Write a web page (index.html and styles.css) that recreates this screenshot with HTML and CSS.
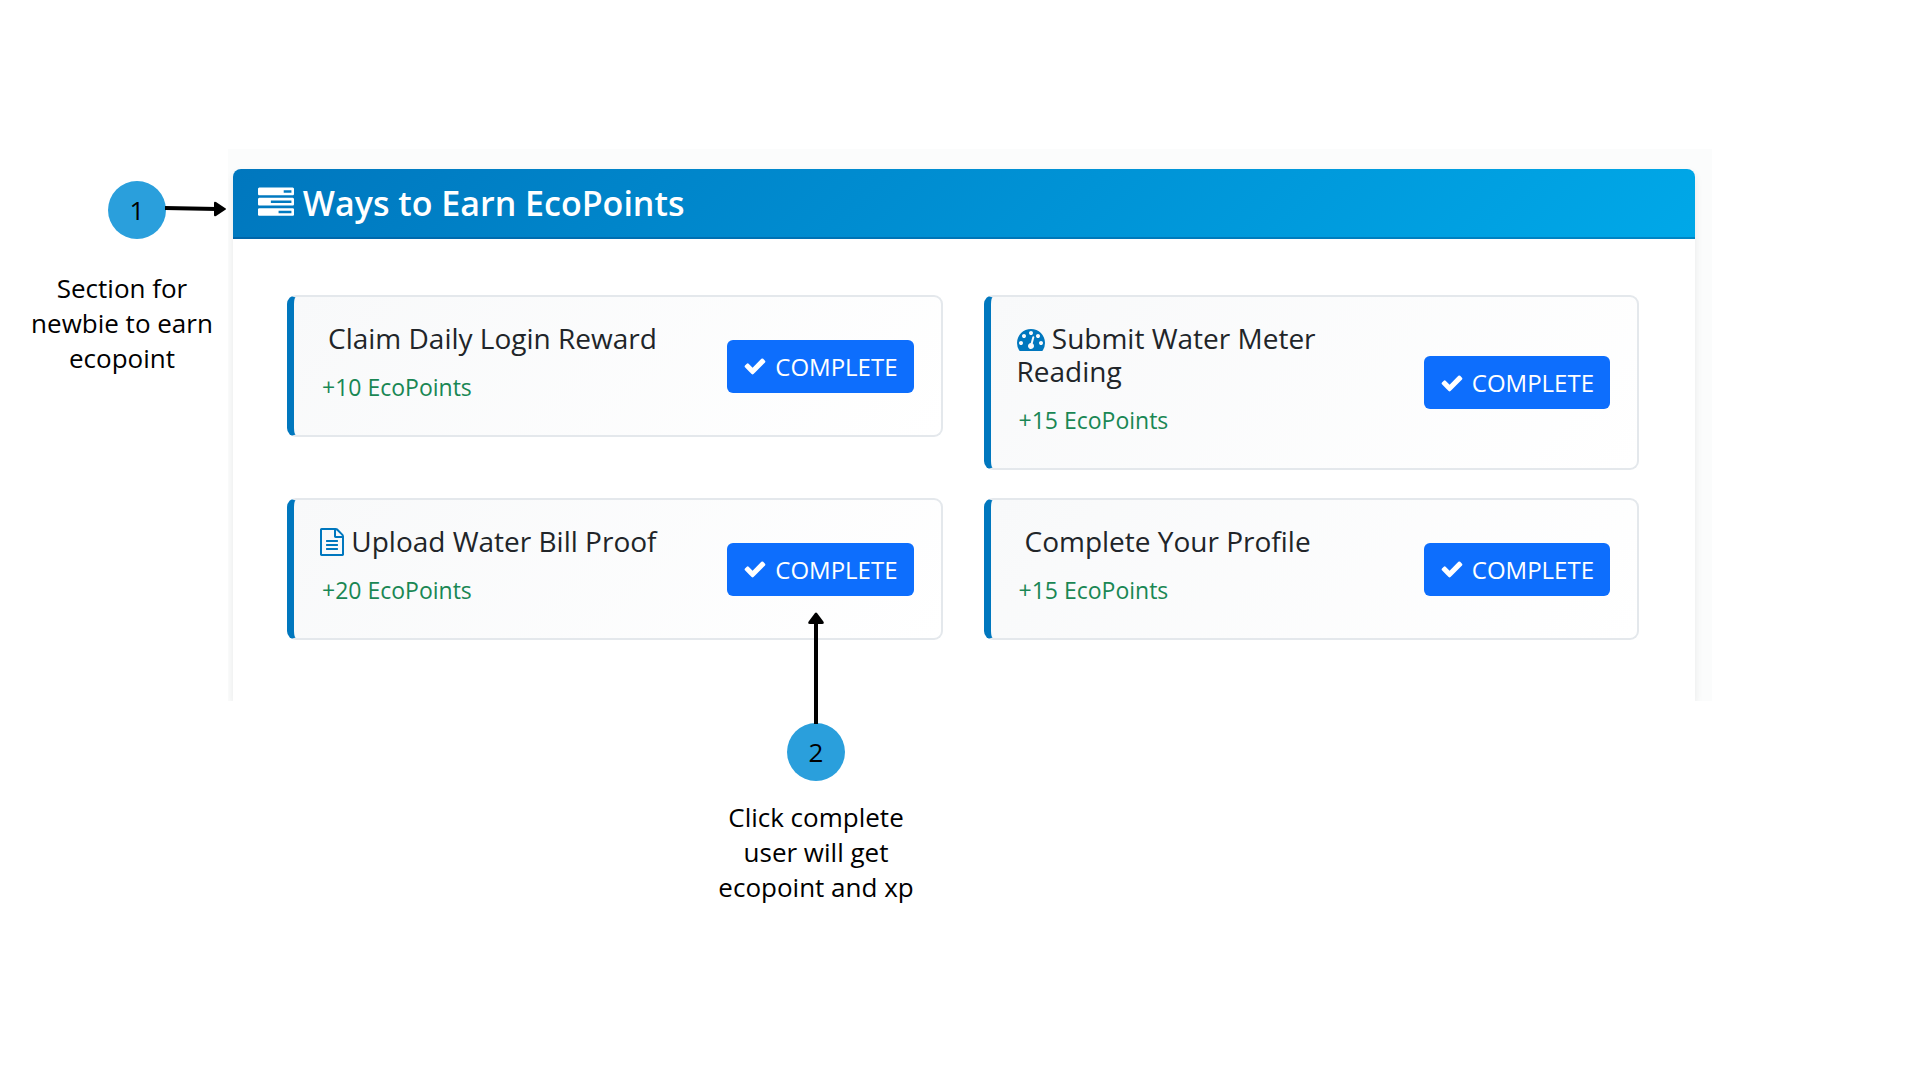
FILE: index.html
```html
<!DOCTYPE html>
<html lang="en">
<head>
  <meta charset="UTF-8">
  <meta name="viewport" content="width=device-width, initial-scale=1.0">
  <title>Ways to Earn EcoPoints</title>
  <link rel="stylesheet" href="styles.css">
</head>
<body>
  <!-- Shared icons -->
  <svg class="sprite" aria-hidden="true">
    <symbol id="icon-tasks" viewBox="0 0 1792 1792">
      <path d="M1024 1408h640v-128h-640v128zm-384-512h1024v-128h-1024v128zm640-512h384v-128h-384v128zm512 832v256q0 26-19 45t-45 19h-1664q-26 0-45-19t-19-45v-256q0-26 19-45t45-19h1664q26 0 45 19t19 45zm0-512v256q0 26-19 45t-45 19h-1664q-26 0-45-19t-19-45v-256q0-26 19-45t45-19h1664q26 0 45 19t19 45zm0-512v256q0 26-19 45t-45 19h-1664q-26 0-45-19t-19-45v-256q0-26 19-45t45-19h1664q26 0 45 19t19 45z"/>
    </symbol>
    <symbol id="icon-meter" viewBox="0 0 1792 1792">
      <path d="M384 1152q0-53-37.500-90.500t-90.500-37.500-90.500 37.500-37.500 90.500 37.500 90.500 90.500 37.500 90.500-37.500 37.500-90.500zm192-448q0-53-37.500-90.500t-90.500-37.500-90.500 37.500-37.500 90.500 37.500 90.500 90.500 37.500 90.500-37.500 37.500-90.500zm428 481l101-382q6-26-7.500-48.500t-38.500-29.500-48 6.500-30 39.500l-101 382q-60 5-107 43.500t-63 98.500q-20 77 20 146t117 89 146-20 89-117q16-60-6-117t-72-91zm660-33q0-53-37.500-90.500t-90.500-37.500-90.500 37.500-37.500 90.500 37.500 90.500 90.500 37.500 90.500-37.500 37.500-90.500zm-640-640q0-53-37.500-90.500t-90.500-37.500-90.500 37.500-37.500 90.500 37.500 90.500 90.500 37.500 90.500-37.500 37.500-90.500zm448 192q0-53-37.500-90.500t-90.500-37.500-90.500 37.500-37.500 90.500 37.500 90.500 90.500 37.500 90.500-37.500 37.500-90.500zm320 448q0 261-141 483-19 29-54 29h-1402q-35 0-54-29-141-221-141-483 0-182 71-348t191-286 286-191 348-71 348 71 286 191 191 286 71 348z"/>
    </symbol>
    <symbol id="icon-file" viewBox="128 0 1536 1792">
      <path d="M1596 380q28 28 48 76t20 88v1152q0 40-28 68t-68 28h-1344q-40 0-68-28t-28-68v-1600q0-40 28-68t68-28h896q40 0 88 20t76 48zm-444-244v376h376q-10-29-22-41l-313-313q-12-12-41-22zm384 1528v-1024h-416q-40 0-68-28t-28-68v-416h-768v1536h1280zm-1024-864q0-14 9-23t23-9h704q14 0 23 9t9 23v64q0 14-9 23t-23 9h-704q-14 0-23-9t-9-23v-64zm736 224q14 0 23 9t9 23v64q0 14-9 23t-23 9h-704q-14 0-23-9t-9-23v-64q0-14 9-23t23-9h704zm0 256q14 0 23 9t9 23v64q0 14-9 23t-23 9h-704q-14 0-23-9t-9-23v-64q0-14 9-23t23-9h704z"/>
    </symbol>
    <symbol id="icon-check" viewBox="0 0 1792 1792">
      <path d="M1671 566q0 40-28 68l-724 724-136 136q-28 28-68 28t-68-28l-136-136-362-362q-28-28-28-68t28-68l136-136q28-28 68-28t68 28l294 295 656-657q28-28 68-28t68 28l136 136q28 28 28 68z"/>
    </symbol>
  </svg>

  <main class="guide">
    <aside class="note note-section">
      <div class="badge">1
        <svg class="arrow-right" viewBox="0 0 62 16" aria-hidden="true">
          <path d="M0 7L52 8" fill="none" stroke="#000" stroke-width="4"/>
          <path d="M51 1L60 7Q62 8 60 9L51 15Q49 16 49 14V2Q49 0 51 1z"/>
        </svg>
      </div>
      <p>Section for newbie to earn ecopoint</p>
    </aside>

    <div class="screen">
      <section class="panel">
        <header class="panel-header">
          <h1><svg class="icon"><use href="#icon-tasks"/></svg> Ways to Earn EcoPoints</h1>
        </header>
        <div class="tasks">
          <div class="task">
            <div class="task-info">
              <h2 class="no-icon">Claim Daily Login Reward</h2>
              <p>+10 EcoPoints</p>
            </div>
            <button class="btn" type="button"><svg class="icon"><use href="#icon-check"/></svg>COMPLETE</button>
          </div>
          <div class="task">
            <div class="task-info">
              <h2><svg class="icon"><use href="#icon-meter"/></svg> Submit Water Meter Reading</h2>
              <p>+15 EcoPoints</p>
            </div>
            <button class="btn" type="button"><svg class="icon"><use href="#icon-check"/></svg>COMPLETE</button>
          </div>
          <div class="task">
            <div class="task-info">
              <h2><svg class="icon icon-narrow"><use href="#icon-file"/></svg> Upload Water Bill Proof</h2>
              <p>+20 EcoPoints</p>
            </div>
            <button class="btn" type="button"><svg class="icon"><use href="#icon-check"/></svg>COMPLETE</button>
          </div>
          <div class="task">
            <div class="task-info">
              <h2 class="no-icon">Complete Your Profile</h2>
              <p>+15 EcoPoints</p>
            </div>
            <button class="btn" type="button"><svg class="icon"><use href="#icon-check"/></svg>COMPLETE</button>
          </div>
        </div>
      </section>
    </div>

    <aside class="note note-complete">
      <div class="badge">2
        <svg class="arrow-up" viewBox="0 0 16 112" aria-hidden="true">
          <path d="M8 112V10" fill="none" stroke="#000" stroke-width="4"/>
          <path d="M7 1Q8 0 9 1L15 9Q17 12 14 12H2Q-1 12 1 9z"/>
        </svg>
      </div>
      <p>Click complete user will get ecopoint and xp</p>
    </aside>
  </main>
</body>
</html>
```

FILE: styles.css
```css
* {
  box-sizing: border-box;
}
body {
  margin: 0;
  font-family: "Open Sans", "Noto Sans", sans-serif;
  background-color: #fff;
  color: #212529;
}
h1, h2, p {
  margin: 0;
}
.sprite {
  display: none;
}
.icon {
  width: 1em;
  height: 1em;
  fill: currentColor;
}

/* Page: notes on the left and below, the panel in the middle */
.guide {
  display: grid;
  grid-template-columns: 228px 1fr 208px;
  padding-top: 149px;
}
.screen {
  grid-column: 2;
  padding: 20px 17px 0 5px;
  background: #fbfcfc;
  overflow: hidden;
}

/* Panel */
.panel {
  background: #fff;
  border-radius: 8px 8px 0 0;
  box-shadow: 0 4px 8px rgba(0, 0, 0, 0.08);
}
.panel-header {
  padding: 12px 25px;
  background: linear-gradient(135deg, #0077be, #00a8e8);
  border-bottom: 2px solid rgba(0, 60, 120, 0.3);
  border-radius: 8px 8px 0 0;
  color: #fff;
}
.panel-header h1 {
  font-size: 34px;
  font-weight: 600;
  line-height: 44px;
}
.panel-header .icon {
  width: 36px;
  height: 36px;
  vertical-align: -5px;
}
.tasks {
  display: grid;
  grid-template-columns: 1fr 1fr;
  align-items: start;
  gap: 28px 41px;
  padding: 56px 56px 61px 54px;
}
.task {
  display: flex;
  align-items: center;
  justify-content: space-between;
  gap: 16px;
  padding: 25px 27px 25px 26px;
  background: linear-gradient(135deg, #f8f9fa, #fff);
  border: 2px solid #e4e8ec;
  border-left: 7px solid #0077be;
  border-radius: 9px;
}
.task-info {
  padding-bottom: 5px;
}
.task h2 {
  margin-bottom: 14px;
  font-size: 28px;
  font-weight: 400;
  line-height: 33px;
}
.task h2.no-icon {
  padding-left: 8px;
}
.task h2 .icon {
  color: #0077be;
  vertical-align: -4px;
}
.task h2 .icon-narrow {
  width: 24px;
}
.task p {
  padding-left: 2px;
  font-size: 23px;
  line-height: 36px;
  color: #198754;
}
.btn {
  display: flex;
  flex-shrink: 0;
  align-items: center;
  gap: 8px;
  padding: 8px 16px;
  font-family: inherit;
  font-size: 24px;
  line-height: 37px;
  color: #fff;
  background: #0d6efd;
  border: none;
  border-radius: 6px;
  cursor: pointer;
}

/* Numbered notes */
.note {
  display: flex;
  flex-direction: column;
  align-items: center;
  font-size: 26px;
  line-height: 35px;
  text-align: center;
  color: #000;
}
.note p {
  width: 204px;
}
.badge {
  position: relative;
  width: 58px;
  height: 58px;
  margin-bottom: 32px;
  line-height: 58px;
  background: #2a9fdc;
  border-radius: 50%;
}
.note-section {
  padding-top: 32px;
  padding-left: 16px;
}
.note-section .badge {
  margin-left: 30px;
}
.note-complete {
  grid-column: 2;
  justify-self: start;
  width: 220px;
  margin: 22px 0 0 478px;
}
.note-complete .badge {
  margin-bottom: 19px;
}
.arrow-right {
  position: absolute;
  top: 20px;
  left: 57px;
  width: 62px;
  height: 16px;
}
.arrow-up {
  position: absolute;
  bottom: 57px;
  left: 21px;
  width: 16px;
  height: 112px;
}
```
